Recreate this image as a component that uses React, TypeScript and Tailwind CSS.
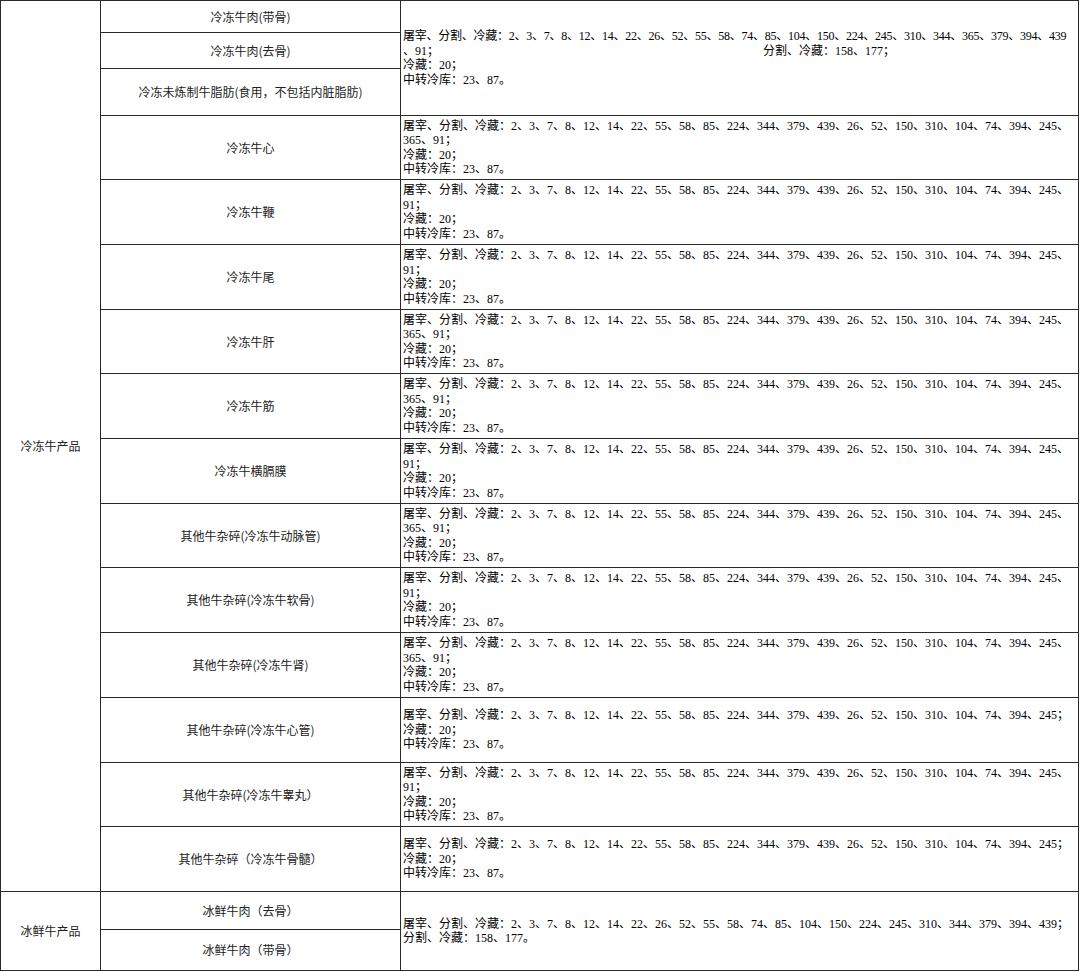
import React from 'react';

const LONG = '屠宰、分割、冷藏：2、3、7、8、12、14、22、55、58、85、224、344、379、439、26、52、150、310、104、74、394、245、';
const SHORT = '屠宰、分割、冷藏：2、3、7、8、12、14、22、55、58、85、224、344、379、439、26、52、150、310、104、74、394、245；';
const COLD = '冷藏：20；';
const TRANSFER = '中转冷库：23、87。';

type Variant = '365' | '91' | 'short';

// one row per frozen item below the first merged block
const frozen: { name: string; variant: Variant }[] = [
  { name: '冷冻牛心', variant: '365' },
  { name: '冷冻牛鞭', variant: '91' },
  { name: '冷冻牛尾', variant: '91' },
  { name: '冷冻牛肝', variant: '365' },
  { name: '冷冻牛筋', variant: '365' },
  { name: '冷冻牛横膈膜', variant: '91' },
  { name: '其他牛杂碎(冷冻牛动脉管)', variant: '365' },
  { name: '其他牛杂碎(冷冻牛软骨)', variant: '91' },
  { name: '其他牛杂碎(冷冻牛肾)', variant: '365' },
  { name: '其他牛杂碎(冷冻牛心管)', variant: 'short' },
  { name: '其他牛杂碎(冷冻牛睾丸）', variant: '91' },
  { name: '其他牛杂碎（冷冻牛骨髓）', variant: 'short' },
];

const cell = 'border-r border-b border-[#2a2a2a] flex items-center';
const nameCell = `${cell} justify-center text-[12px] text-[#222] font-['Noto_Sans_CJK_SC','Liberation_Sans',sans-serif]`;
const infoCell = `${cell} pl-[2px] text-[12px] leading-[14.5px] text-black whitespace-nowrap font-['Liberation_Serif','Noto_Sans_CJK_SC',serif]`;

const Lines: React.FC<{ lines: React.ReactNode[] }> = ({ lines }) => (
  <div className="flex flex-col">
    {lines.map((l, i) => (
      <div key={i}>{l}</div>
    ))}
  </div>
);

const linesFor = (v: Variant) => {
  if (v === 'short') return [SHORT, COLD, TRANSFER];
  return [LONG, v === '365' ? '365、91；' : '91；', COLD, TRANSFER];
};

export default function App() {
  return (
    <div className="bg-white w-[1080px] h-[972px]">
      <div className="grid w-[1079px] grid-cols-[100px_300px_678px] grid-rows-[32px_36px_47px_64px_65px_65px_64px_65px_65px_64px_65px_65px_65px_64px_65px_38px_41px] border-l border-t border-[#2a2a2a]">
        <div className={`${nameCell} row-span-15`}>冷冻牛产品</div>

        <div className={nameCell}>冷冻牛肉(带骨)</div>
        <div className={`${infoCell} row-span-3`}>
          <Lines
            lines={[
              <span className="tracking-[-0.25px]">
                屠宰、分割、冷藏：2、3、7、8、12、14、22、26、52、55、58、74、85、104、150、224、245、310、344、365、379、394、439
              </span>,
              <>
                <span className="inline-block w-[360px]">、91；</span>分割、冷藏：158、177；
              </>,
              COLD,
              TRANSFER,
            ]}
          />
        </div>
        <div className={nameCell}>冷冻牛肉(去骨)</div>
        <div className={nameCell}>冷冻未炼制牛脂肪(食用，不包括内脏脂肪)</div>

        {frozen.map((r) => (
          <React.Fragment key={r.name}>
            <div className={nameCell}>{r.name}</div>
            <div className={infoCell}>
              <Lines lines={linesFor(r.variant)} />
            </div>
          </React.Fragment>
        ))}

        <div className={`${nameCell} row-span-2`}>冰鲜牛产品</div>
        <div className={nameCell}>冰鲜牛肉（去骨）</div>
        <div className={`${infoCell} row-span-2`}>
          <Lines
            lines={[
              '屠宰、分割、冷藏：2、3、7、8、12、14、22、26、52、55、58、74、85、104、150、224、245、310、344、379、394、439；',
              '分割、冷藏：158、177。',
            ]}
          />
        </div>
        <div className={nameCell}>冰鲜牛肉（带骨）</div>
      </div>
    </div>
  );
}
